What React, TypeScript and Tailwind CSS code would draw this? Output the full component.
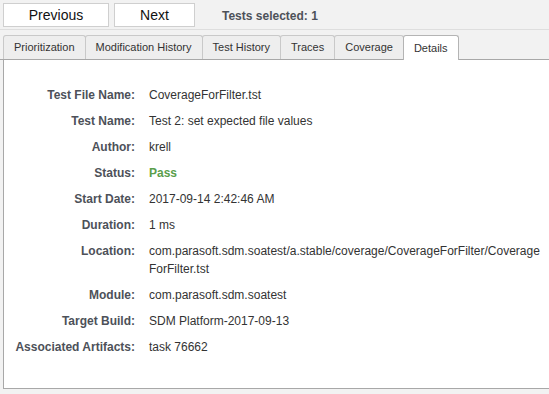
import React from 'react';

const tabs = ['Prioritization', 'Modification History', 'Test History', 'Traces', 'Coverage', 'Details'];

const rows: { label: string; value: string; green?: boolean }[] = [
  { label: 'Test File Name:', value: 'CoverageForFilter.tst' },
  { label: 'Test Name:', value: 'Test 2: set expected file values' },
  { label: 'Author:', value: 'krell' },
  { label: 'Status:', value: 'Pass', green: true },
  { label: 'Start Date:', value: '2017-09-14 2:42:46 AM' },
  { label: 'Duration:', value: '1 ms' },
  { label: 'Location:', value: 'com.parasoft.sdm.soatest/a.stable/coverage/CoverageForFilter/CoverageForFilter.tst' },
  { label: 'Module:', value: 'com.parasoft.sdm.soatest' },
  { label: 'Target Build:', value: 'SDM Platform-2017-09-13' },
  { label: 'Associated Artifacts:', value: 'task 76662' },
];

export default function App() {
  return (
    <div className="w-[549px] h-[394px] bg-[#f2f2f2] overflow-hidden text-[#333] font-['Liberation_Sans',Arial,sans-serif]">
      {/* Toolbar */}
      <div className="h-[30px] flex items-start gap-[5px] pl-[3px] pt-[3px] border-b border-[#dedede]">
        <button className="w-[106px] h-[24px] bg-white border border-[#cfcfcf] text-[14px] text-[#111]">Previous</button>
        <button className="w-[81px] h-[24px] bg-white border border-[#cfcfcf] text-[14px] text-[#111]">Next</button>
        <div className="ml-[22px] mt-[4px] text-[12px] font-bold text-[#4d5159]">Tests selected: 1</div>
      </div>

      {/* Tabs */}
      <div className="mt-[5px] pl-[3px] flex items-end h-[25px] border-b border-[#a8a8a8]">
        {tabs.map((t) => {
          const active = t === 'Details';
          return (
            <div
              key={t}
              className={
                active
                  ? 'h-[25px] -mb-px px-[10px] pt-[1px] flex items-center text-[11px] text-[#333] bg-white border border-b-0 border-[#b4b4b4] rounded-t-[3px]'
                  : 'h-[24px] -mr-px px-[10px] flex items-center text-[11px] text-[#333] bg-[#eeeeee] border border-b-0 border-[#c9c9c9] rounded-t-[3px]'
              }
            >
              {t}
            </div>
          );
        })}
      </div>

      {/* Panel */}
      <div className="ml-[3px] h-[329px] bg-white border-l border-b border-[#a8a8a8] pt-[22px]">
        <div className="grid grid-cols-[131px_1fr] gap-x-[14px] text-[12px] leading-[18px]">
          {rows.map((r) => (
            <React.Fragment key={r.label}>
              <div className="py-[4px] text-right font-bold text-[#4d5159]">{r.label}</div>
              <div className={'py-[4px] pr-[4px] break-all ' + (r.green ? 'font-bold text-[#5a9e4b]' : 'text-[#333]')}>
                {r.value}
              </div>
            </React.Fragment>
          ))}
        </div>
      </div>
    </div>
  );
}
